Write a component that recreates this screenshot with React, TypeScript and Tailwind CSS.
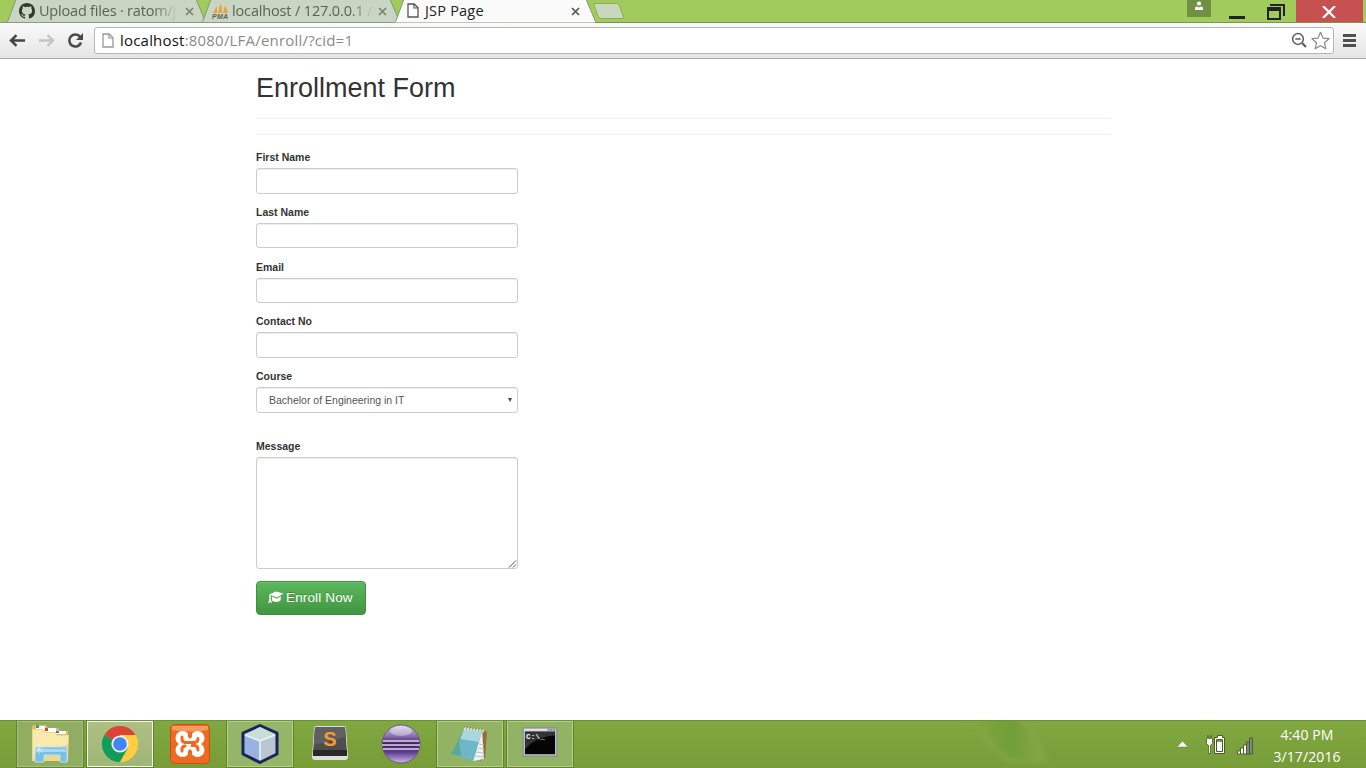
import React from "react";

const ui = "font-['Open_Sans','Noto_Sans',sans-serif]";

function TabShape({ w, fill }: { w: number; fill: string }) {
  return (
    <svg className="absolute inset-0" width={w} height={24} viewBox={`0 0 ${w} 24`} aria-hidden="true">
      <path d={`M0 23 C3 23 4 21 5 18 L12 -1 H${w - 12} L${w - 4} 18 C${w - 3} 21 ${w - 2} 23 ${w} 23 Z`} fill={fill} stroke="#84976f" strokeWidth="1" />
    </svg>
  );
}

function CloseGlyph({ color, className }: { color: string; className: string }) {
  return (
    <svg className={className} width="9" height="9" viewBox="0 0 9 9">
      <path d="M1 1l7 7M8 1l-7 7" stroke={color} strokeWidth="1.7" />
    </svg>
  );
}

function PageIcon({ color, className }: { color: string; className: string }) {
  return (
    <svg className={className} width="12" height="15" viewBox="0 0 12 15">
      <path d="M1 1h6.200l3.800 3.800V14H1z" fill="#fff" stroke={color} strokeWidth="1.300" />
      <path d="M7 1v4h4" fill="none" stroke={color} strokeWidth="1.200" />
    </svg>
  );
}

function TabStrip() {
  return (
    <div className={`relative flex h-[23px] overflow-hidden bg-[#a1cc5d] text-[14.500px] leading-[22px] ${ui}`}>
      <div className="relative ml-1 flex w-[204px] shrink-0">
        <TabShape w={204} fill="#c9d6c3" />
        <svg className="relative ml-[15px] mt-[3px] shrink-0" width="16" height="16" viewBox="0 0 16 16" fill="#313c2c">
          <path d="M8 0C3.580 0 0 3.580 0 8c0 3.540 2.290 6.530 5.470 7.590.4.070.55-.17.55-.38 0-.19-.01-.82-.01-1.490-2.010.37-2.530-.49-2.690-.94-.09-.23-.48-.94-.82-1.130-.28-.15-.68-.52-.01-.53.63-.01 1.080.58 1.230.82.72 1.210 1.870.87 2.330.66.07-.52.28-.87.51-1.070-1.780-.2-3.640-.89-3.640-3.950 0-.87.31-1.590.82-2.150-.08-.2-.36-1.020.08-2.120 0 0 .67-.21 2.200.82A7.600 7.600 0 0 1 8 3.860c.68 0 1.360.09 2 .27 1.530-1.040 2.200-.82 2.200-.82.44 1.100.16 1.920.08 2.120.51.56.82 1.270.82 2.150 0 3.070-1.870 3.750-3.650 3.950.29.25.54.73.54 1.480 0 1.070-.01 1.930-.01 2.200 0 .21.15.46.55.38A8.010 8.010 0 0 0 16 8c0-4.420-3.580-8-8-8z" />
        </svg>
        <span className="relative ml-1 w-[142px] whitespace-nowrap tracking-[-0.200px] text-[#5a6552] [mask-image:linear-gradient(to_right,#000_80%,transparent_98%)]">Upload files · ratom/j</span>
        <CloseGlyph className="relative ml-[4px] mt-[7px] shrink-0" color="#78846f" />
      </div>
      <div className="relative -ml-[9px] flex w-[203px] shrink-0">
        <TabShape w={203} fill="#c9d6c3" />
        <svg className="relative ml-[13px] mt-[3px] shrink-0" width="17" height="16" viewBox="0 0 17 16">
          <path d="M1 10L5 3v7zM6 10L8.500 0q2 5 1.500 10zM11 10L12.500 3q3 3 3.500 7z" fill="#e9a13a" />
          <text x="0" y="15.500" fontSize="7" fontWeight="bold" fontStyle="italic" fontFamily="Liberation Sans" fill="#5c6257" textLength="16">PMA</text>
        </svg>
        <span className="relative ml-[3px] w-[142px] whitespace-nowrap tracking-[-0.150px] text-[#5a6552] [mask-image:linear-gradient(to_right,#000_84%,transparent_100%)]">localhost / 127.0.0.1 /</span>
        <CloseGlyph className="relative ml-[4px] mt-[7px] shrink-0" color="#78846f" />
      </div>
      <div className="relative -ml-[10px] flex w-[206px] shrink-0">
        <TabShape w={206} fill="#fafafa" />
        <PageIcon className="relative ml-[15px] mt-[3px] shrink-0" color="#555" />
        <span className="relative ml-[6px] w-[138px] whitespace-nowrap tracking-[0.200px] text-[#222]">JSP Page</span>
        <CloseGlyph className="relative ml-[8px] mt-[7px] shrink-0" color="#555" />
      </div>
      <svg className="-ml-[7px] mt-[2px] shrink-0" width="34" height="18" viewBox="0 0 34 18">
        <path d="M3.500 1.500h22q2 0 2.800 2l4 11q.7 2-1.500 2H10q-2 0-2.800-2l-4-11q-.5-2 .8-2z" fill="#c9d8bd" stroke="#8aab58" />
      </svg>
      <div className="ml-auto flex">
        <div className="flex h-[17px] w-6 justify-center bg-[#709143]">
          <svg width="12" height="12" viewBox="0 0 12 12" fill="#fff">
            <circle cx="6" cy="3.500" r="2.100" /><path d="M2 10V8q0-1.500 2-1.500l2 1 2-1q2 0 2 1.500v2z" />
          </svg>
        </div>
        <svg className="ml-[17px]" width="18" height="22" viewBox="0 0 18 22"><path d="M1 16h16v3H1z" fill="#222" /></svg>
        <svg className="ml-5" width="20" height="22" viewBox="0 0 20 22">
          <path d="M4 5h14v11" fill="none" stroke="#222" strokeWidth="2" />
          <path d="M2 9h12v10H2z" fill="none" stroke="#222" strokeWidth="2" />
          <path d="M1 7h14v4H1z" fill="#222" />
        </svg>
        <div className="ml-[10px] flex h-[23px] w-[67px] items-center justify-center bg-[#c75050]">
          <svg className="mr-[1px]" width="14" height="12" viewBox="0 0 14 12"><path d="M1 0l12 12M13 0L1 12" stroke="#fff" strokeWidth="2.200" /></svg>
        </div>
        <div className="w-[3px]" />
      </div>
      <div className="absolute bottom-0 left-0 h-px w-[393px] bg-[#8c9d76]" />
      <div className="absolute bottom-0 left-[595px] right-0 h-px bg-[#789a48]" />
    </div>
  );
}

function Toolbar() {
  return (
    <div className="flex h-9 items-start border-b border-[#a9a9a9] bg-linear-to-b from-[#fafafa] to-[#e5e5e5] pt-1">
      <svg className="ml-[9px] mt-[7px] shrink-0" width="17" height="13" viewBox="0 0 17 13"><path d="M16 6.500H3M7.500 1.200L2 6.500l5.500 5.300" fill="none" stroke="#444" strokeWidth="2.500" /></svg>
      <svg className="ml-[12px] mt-[7px] shrink-0" width="17" height="13" viewBox="0 0 17 13"><path d="M1 6.500h13M9.500 1.200L15 6.500l-5.500 5.300" fill="none" stroke="#c4c4c4" strokeWidth="2.300" /></svg>
      <svg className="ml-[12px] mt-[5px] shrink-0" width="17" height="17" viewBox="0 0 17 17">
        <path d="M13.200 5A6 6 0 1 0 14 10.500" fill="none" stroke="#4a4a4a" strokeWidth="2.600" />
        <path d="M16 1v7H9z" fill="#4a4a4a" />
      </svg>
      <div className="ml-[10px] flex h-[27px] w-[1240px] rounded-[3px] border border-[#b5b5b5] bg-white">
        <PageIcon className="ml-[7px] mt-[5px] shrink-0" color="#999" />
        <span className={`ml-[6px] text-[15px] leading-[25px] tracking-[0.200px] text-[#8a8a8a] ${ui}`}><span className="text-[#111]">localhost</span>:8080/LFA/enroll/?cid=1</span>
        <svg className="ml-auto mt-[4px]" width="17" height="17" viewBox="0 0 17 17" fill="none" stroke="#5c5c5c">
          <circle cx="7" cy="7" r="5.400" strokeWidth="1.500" /><path d="M4.300 7h5.400" strokeWidth="1.500" /><path d="M11 11l4 4" strokeWidth="2.200" />
        </svg>
        <svg className="ml-[3px] mr-[3px] mt-[3px]" width="19" height="19" viewBox="0 0 19 19">
          <path d="M9.500 1.300l2.500 5.800 6 .6-4.500 4.100 1.300 6-5.300-3.100-5.300 3.100 1.300-6L1 7.700l6-.6z" fill="#fff" stroke="#888" strokeWidth="1.200" strokeLinejoin="round" />
        </svg>
      </div>
      <svg className="ml-[9px] mt-[7px]" width="13" height="14" viewBox="0 0 13 14"><path d="M0 1.500h13M0 6.500h13M0 11.500h13" stroke="#505050" strokeWidth="3" /></svg>
    </div>
  );
}

const label = "block h-[18px] text-[10.500px] font-bold leading-[15px] text-[#333]";
const control = "block w-[262px] rounded-[3px] border border-[#ccc] bg-white shadow-[inset_0_1px_1px_rgba(0,0,0,0.075)] outline-none";
const fields = [
  { name: "First Name", input: "h-[26px]", gap: "mb-[11px]" },
  { name: "Last Name", input: "h-[25px]", gap: "mb-3" },
  { name: "Email", input: "h-[25px]", gap: "mb-[11px]" },
  { name: "Contact No", input: "h-[26px]", gap: "mb-[11px]" },
];

function EnrollmentForm() {
  return (
    <main className="h-[661px] bg-white pl-64 pr-[255px] pt-[14px] font-['Liberation_Sans',Arial,sans-serif]">
      <h1 className="h-[45px] text-[27px] leading-[30px] text-[#333]">Enrollment Form</h1>
      <div className="h-[17px] border-y border-[#eee]" />
      <form className="pt-[15px]">
        {fields.map((f) => (
          <div key={f.name} className={f.gap}>
            <label className={label}>{f.name}</label>
            <input aria-label={f.name} className={`${control} ${f.input}`} />
          </div>
        ))}
        <label className={label}>Course</label>
        <div className={`${control} mb-[26px] h-[26px] pl-3 pr-[5px] text-[10.500px] text-[#555]`}>
          <div className="flex h-full items-center justify-between">
            <span className="pt-[2px]">Bachelor of Engineering in IT</span>
            <svg width="4" height="4" viewBox="0 0 4 4"><path d="M0 0h4L2 4z" fill="#444" /></svg>
          </div>
        </div>
        <label className={label}>Message</label>
        <div className={`${control} h-28`}>
          <div className="flex h-full items-end justify-end">
            <svg width="9" height="9" viewBox="0 0 9 9"><path d="M1 8.500L8 1.500M5 8.500l3-3" stroke="#555" strokeWidth="1" /></svg>
          </div>
        </div>
        <button type="button" className="mt-3 flex h-[34px] w-[110px] items-center rounded-[4px] border border-[#3e8f3e] bg-linear-to-b from-[#5cb85c] to-[#419641] pl-[11px] text-[13.500px] text-white shadow-[inset_0_1px_0_rgba(255,255,255,0.15)] [text-shadow:0_-1px_0_rgba(0,0,0,0.2)]">
          <svg className="mb-[2px] mr-[2px] shrink-0" width="16" height="13" viewBox="0 0 16 13" fill="#fff">
            <path d="M1 3.500L8 .5l7.500 2-6.500 4z" />
            <path d="M4 5.500l5 2.200 4-2.500-.5 4.300Q8 12.500 4 9.500z" />
            <path d="M1 3.500L3 5v3.500l1 4L2.300 11 0 12.500 1.500 8z" />
          </svg>
          <span className="tracking-[0.150px]">Enroll Now</span>
        </button>
      </form>
    </main>
  );
}

function FolderIcon() {
  return (
    <svg width="40" height="40" viewBox="0 0 40 40">
      <path d="M2 4q0-3 2-3h12l2 3h10l2 3h8v30H3q-1 0-1-1z" fill="#dcc06a" />
      <path d="M6 2h9v4H6zM15 4h11v4H15zM26 7h10v3H26z" fill="#fff" />
      <path d="M6 1h3v3H6z" fill="#3ba35c" /><path d="M15 4h3v3h-3z" fill="#c44a35" /><path d="M26 7h3v2h-3z" fill="#307fc4" />
      <path d="M2 5h11l2 3h10l2 3h12l-1 26H2z" fill="#eed88c" />
      <path d="M3 6h10l2 3h10l2 3h11v8L3 34z" fill="#f8e9ad" />
      <path d="M5 25q0-2 2-2h28q2 0 2 2v13h-7v-7H14v7H5z" fill="#78bfe3" stroke="#b9e2f4" />
      <path d="M6 25h30v3H6z" fill="#a9d9f0" />
      <path d="M9 19v12M3 25h12M5 21l8 8M13 21l-8 8" stroke="#fff" strokeOpacity=".4" />
    </svg>
  );
}

function ChromeIcon() {
  return (
    <svg width="38" height="38" viewBox="0 0 38 38">
      <path d="M19 19L3.400 10A18 18 0 0 1 34.600 10H19z" fill="#db4437" />
      <path d="M19 19L3.400 10A18 18 0 0 0 19 37l7.800-13.500z" fill="#139b59" />
      <path d="M19 10h15.600A18 18 0 0 1 19 37l8-14z" fill="#ffcd40" />
      <circle cx="19" cy="19" r="8.600" fill="#f1f1f1" /><circle cx="19" cy="19" r="6.800" fill="#4285f4" />
    </svg>
  );
}

function XamppIcon() {
  return (
    <svg width="40" height="40" viewBox="0 0 40 40">
      <rect x=".5" y=".5" width="39" height="39" rx="4" fill="#ee6a22" stroke="#c9500f" />
      <path d="M2 2h36v4Q20 9 2 6z" fill="#f59a61" />
      <g fill="#fff"><circle cx="12.500" cy="14" r="7" /><circle cx="27.500" cy="14" r="7" /><circle cx="12.500" cy="26" r="7" /><circle cx="27.500" cy="26" r="7" /><path d="M9 14h22v12H9z" /></g>
      <path d="M12 13v2q0 3 3 3.500h10q3-.5 3-4M12 27v-2q0-2.500 3-3M22 21.500h3q3 .5 3 4.500" fill="none" stroke="#ee6a22" strokeWidth="3" strokeLinecap="round" />
      <path d="M18 9.500h4V13l-2 2-2-2zM18 31v-4l2-2 2 2v4z" fill="#ee6a22" />
    </svg>
  );
}

function CubeIcon() {
  return (
    <svg width="40" height="42" viewBox="0 0 40 42">
      <path d="M20 2.500L37 10v21L20 39.500 3 31V10z" fill="#a9bde0" stroke="#1b2459" strokeWidth="3" strokeLinejoin="round" />
      <path d="M5 11.500l15-7.500 15 7.500-15 6z" fill="#c9ded9" />
      <path d="M5 12l15 6v19L5 30z" fill="#98b2e4" /><path d="M20 18l15-6v18l-15 7z" fill="#b8c7d0" />
      <path d="M5 12l15 6 15-6M20 18v19" fill="none" stroke="#ecf4fb" strokeWidth="1.500" />
    </svg>
  );
}

function SublimeIcon() {
  return (
    <svg width="38" height="38" viewBox="0 0 38 38">
      <path d="M3 3q0-2 2-2h28q2 0 2 2l2 29q0 3-3 3H4q-3 0-3-3z" fill="#dedede" />
      <path d="M4 2h30l2 26H2z" fill="#4e4e4e" /><path d="M2 25h34v6H2z" fill="#292929" />
      <path d="M4 2h30l1 10L3 20z" fill="#606060" />
      <text x="19" y="21" textAnchor="middle" fontFamily="Liberation Sans" fontWeight="bold" fontSize="20" fill="#f89b2d">S</text>
    </svg>
  );
}

function EclipseIcon() {
  return (
    <svg className="ml-0.5" width="40" height="40" viewBox="0 0 40 40">
      <defs>
        <linearGradient id="orb" x1="0" y1="0" x2="0" y2="1"><stop stopColor="#d9cde8" /><stop offset=".28" stopColor="#8c76b2" /><stop offset=".5" stopColor="#3c1f61" /><stop offset=".72" stopColor="#5d4090" /><stop offset="1" stopColor="#d0b9e6" /></linearGradient>
      </defs>
      <circle cx="20" cy="20" r="19" fill="url(#orb)" stroke="#6d578f" />
      <ellipse cx="20" cy="7" rx="11" ry="5" fill="#fff" fillOpacity=".35" />
      <path d="M2 17h36M1 21h38M2 25h36" stroke="#ded4ed" strokeWidth="1.500" />
    </svg>
  );
}

function NotepadIcon() {
  return (
    <svg width="40" height="40" viewBox="0 0 40 40">
      <path d="M33 6l4 2-2 26-5 3z" fill="#9b6b35" />
      <path d="M32 7l2 28-11 2z" fill="#edf3f4" />
      <path d="M14 5l18 3-9 29L1 30z" fill="#6db7c8" />
      <path d="M14 5l18 3-3 10-19-3z" fill="#a9d6df" />
      <path d="M14 5l-5 13 2 14-10-2z" fill="#5aa992" />
      <path d="M14 4.500l20 2.500" stroke="#deded5" strokeWidth="3" strokeDasharray="2 1" /><path d="M14 3l20 2.500" stroke="#747a73" strokeDasharray="1 2" />
      <path d="M29 20l5 1M28 24l6 1M26 28l8 1M25 32l9 1" stroke="#b5c3c9" />
    </svg>
  );
}

function TerminalIcon() {
  return (
    <svg className="mb-[4px] mr-px" width="36" height="30" viewBox="0 0 38 32">
      <path d="M1 1h36v30H1z" fill="#b9bdc5" stroke="#85898e" /><path d="M3 5h32v24H3z" fill="#050505" />
      <path d="M3 5h32v4Q13 11 4 23H3z" fill="#333" />
      <path d="M2 3h25" stroke="#e5e6ea" strokeWidth="2" /><path d="M27 3h8" stroke="#666b75" strokeDasharray="2 1" />
      <text x="4" y="13" fontFamily="Liberation Mono" fontWeight="bold" fontSize="8" fill="#fff" textLength="20">C:\_</text>
    </svg>
  );
}

const apps = [
  { icon: <FolderIcon />, box: "border-[#a8c07d] bg-[#91ad61] outline outline-[#61822e]" },
  { icon: <ChromeIcon />, box: "border-[#f7faef] bg-linear-to-b from-[#afbf83] to-[#9fb676] outline outline-[#61822e]" },
  { icon: <XamppIcon />, box: "border-transparent" },
  { icon: <CubeIcon />, box: "border-[#b4ce88] bg-[#95b568] outline outline-[#61822e]" },
  { icon: <SublimeIcon />, box: "border-transparent" },
  { icon: <EclipseIcon />, box: "border-transparent" },
  { icon: <NotepadIcon />, box: "border-[#b4ce88] bg-[#92b364] outline outline-[#61822e]" },
  { icon: <TerminalIcon />, box: "border-[#b4ce88] bg-[#92b364] outline outline-[#61822e]" },
];

function Taskbar() {
  return (
    <footer className="relative flex h-12 overflow-hidden border-t border-[#6d9139] bg-linear-to-b from-[#80a840] to-[#789c38] text-white">
      <svg className="absolute left-[940px] top-0" width="140" height="47" viewBox="0 0 140 47">
        <defs>
          <linearGradient id="leaf"><stop stopColor="#80a83d" /><stop offset=".6" stopColor="#709f37" /><stop offset="1" stopColor="#84a641" /></linearGradient>
          <filter id="soft"><feGaussianBlur stdDeviation="2.2" /></filter>
        </defs>
        <g filter="url(#soft)"><path d="M25-3C43 10 51 36 74 42H108C103 24 98 10 87-3z" fill="#83a544" /><path d="M33-3C54 9 50 32 75 38L98 42C96 24 90 10 75-3z" fill="url(#leaf)" /></g>
      </svg>
      <div className="relative flex gap-1 pl-[17px] pb-px">
        {apps.map((app, i) => (
          <div key={i} className={`flex w-[66px] items-center justify-center border ${app.box}`}>{app.icon}</div>
        ))}
      </div>
      <div className="relative ml-auto flex items-center">
        <svg className="mr-[18px]" width="11" height="7" viewBox="0 0 11 7"><path d="M5.500 0L11 6H0z" fill="#f6f6f6" stroke="#668632" strokeWidth=".5" /></svg>
        <svg className="mr-[11px]" width="20" height="21" viewBox="0 0 20 21">
          <path d="M8.500 3.500h3v-2h5v2h2v16h-10z" fill="#fff" stroke="#435c22" />
          <path d="M10.500 5.500h6v12h-6z" fill="#fff" stroke="#435c22" />
          <path d="M11 6h5v2h-5z" fill="#78a03a" />
          <path d="M1.500 4.500v-3h1v3h2v-3h1v3h1v5l-2 2v8h-2v-8l-2-2v-5z" fill="#fff" stroke="#435c22" strokeWidth=".8" />
        </svg>
        <svg className="mr-[20px] mt-0.5" width="17" height="18" viewBox="0 0 17 18" stroke="#425c25" strokeWidth=".9">
          <path d="M.5 14h3v3h-3zM3.500 11h3v6h-3zM6.500 8h3v9h-3z" fill="#fff" /><path d="M9.500 5h3v12h-3zM12.500 1h3v16h-3z" fill="#858585" />
        </svg>
        <div className={`mr-[23px] -ml-[3px] w-[72px] pt-[2px] text-center text-[14px] leading-[22px] tracking-[0.100px] ${ui}`}><div>4:40 PM</div><div>3/17/2016</div></div>
      </div>
    </footer>
  );
}

export default function App() {
  return (
    <div className="flex h-[768px] w-[1366px] flex-col overflow-hidden bg-white">
      <TabStrip />
      <Toolbar />
      <EnrollmentForm />
      <Taskbar />
    </div>
  );
}
